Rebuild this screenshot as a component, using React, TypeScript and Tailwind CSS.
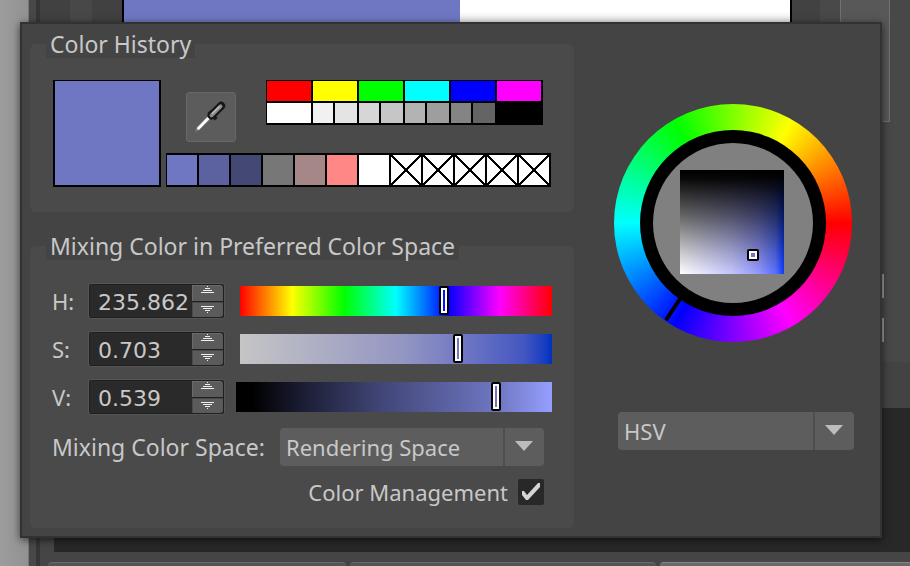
import { useState } from "react";
import type { ReactNode } from "react";

const HUES = ["#ff0000", "#ffff00", "#00ff00", "#00ffff", "#0000ff", "#ff00ff"];
const GRAYS = [
  ["#f1f1f1", "#e4e4e4"],
  ["#d6d6d6", "#c6c6c6"],
  ["#b3b3b3", "#9e9e9e"],
  ["#848484", "#646464"],
];
const HISTORY: (string | null)[] = [
  "#6f77c2", "#5b629f", "#434874", "#777777", "#a48786", "#ff8887", "#ffffff",
  null, null, null, null, null,
];

const THUMB =
  "[&::-webkit-slider-thumb]:appearance-none [&::-webkit-slider-thumb]:w-[10px] [&::-webkit-slider-thumb]:h-[29px] [&::-webkit-slider-thumb]:-mt-px [&::-webkit-slider-thumb]:rounded-[2px] [&::-webkit-slider-thumb]:border-2 [&::-webkit-slider-thumb]:border-black [&::-webkit-slider-thumb]:shadow-[inset_0_0_0_2px_#fff]";

function Swatch({ color, className }: { color: string; className: string }) {
  return (
    <button type="button" aria-label={"Use " + color} className={"block " + className} style={{ backgroundColor: color }} />
  );
}

function EmptySwatch() {
  return (
    <svg className="block size-[30px] bg-white" viewBox="0 0 30 30" shapeRendering="crispEdges" aria-hidden="true">
      <path d="M0 0L30 30M30 0L0 30" stroke="#000" strokeWidth="2.400" />
    </svg>
  );
}

function Eyedropper() {
  return (
    <svg className="size-8" viewBox="2 1 30 30" aria-hidden="true">
      <path d="M2 29L4 25L13 16L16 19L7 27L3 30Z" fill="#777" />
      <path d="M4.500 27.500L15.500 16" stroke="#fff" strokeWidth="2.600" />
      <path d="M15 11L22 18" stroke="#1b1b1b" strokeWidth="3.600" />
      <path d="M17.500 14.500L26.500 5.500" stroke="#161616" strokeWidth="7.600" strokeLinecap="round" />
      <path d="M17.500 14.500L26 6" stroke="#8b8b8b" strokeWidth="3.600" strokeLinecap="round" />
      <path d="M18 13L25 6" stroke="#c0c0c0" strokeWidth="1.400" />
    </svg>
  );
}

function Group({ title, children }: { title: string; children: ReactNode }) {
  return (
    <fieldset className="min-w-0 rounded-md bg-[#4a4a4a]">
      <legend className="ml-4 h-7 bg-[#444444] px-1 text-[23px] leading-7 whitespace-nowrap">{title}</legend>
      {children}
    </fieldset>
  );
}

function StepIcon({ down }: { down?: boolean }) {
  return (
    <svg className="block h-2 w-[14px]" viewBox="0 0 14 8" shapeRendering="crispEdges" aria-hidden="true">
      <path
        d={down ? "M0 0H13V1H0ZM2 2H11V3H2ZM4 4H9V5H4ZM6 6H7V7H6Z" : "M6 0H7V1H6ZM4 2H9V3H4ZM2 4H11V5H2ZM0 6H13V7H0Z"}
        fill="#f0f0f0"
      />
    </svg>
  );
}

function Channel({
  name, label, text, track, initial, wide,
}: { name: string; label: string; text: string; track: string; initial: number; wide?: boolean }) {
  const [pos, setPos] = useState(initial);
  const [value, setValue] = useState(text);
  return (
    <div className="flex h-9 items-center">
      <label htmlFor={name} className="w-9 text-[22px] leading-7">{label}</label>
      <div className="flex h-9 w-[137px] rounded-[3px] border border-[#565656] bg-[#1f1f1f] p-px">
        <input
          id={name}
          value={value}
          onChange={(e) => setValue(e.target.value)}
          className="min-w-0 flex-1 bg-[#2a2a2a] pt-1 pl-2 font-['DejaVu_Sans',sans-serif] text-[22px] leading-7 outline-none"
        />
        <div className="flex w-[31px] flex-col gap-px">
          <button type="button" aria-label={"Increase " + name} className="flex flex-1 items-start justify-center rounded-tr-[3px] border-t border-l border-[#6b6b6b] bg-[#5b5b5b]">
            <StepIcon />
          </button>
          <button type="button" aria-label={"Decrease " + name} className="flex flex-1 items-center justify-center rounded-br-[3px] border-t border-l border-[#4a4a4a] bg-[#5b5b5b]">
            <StepIcon down />
          </button>
        </div>
      </div>
      <input
        type="range"
        aria-label={name + " slider"}
        min={0}
        max={1}
        step={0.001}
        value={pos}
        onChange={(e) => setPos(Number(e.target.value))}
        className={(wide ? "ml-[11px] " : "ml-[15px] ") + "h-[30px] min-w-0 flex-1 appearance-none " + track + " " + THUMB}
      />
    </div>
  );
}

function Dropdown({ id, value, className }: { id: string; value: string; className: string }) {
  return (
    <div className={"relative " + className}>
      <select id={id} aria-label={value} className="block h-[38px] w-full appearance-none rounded bg-[#5d5d5d] pr-10 pl-[6px] text-[22px] leading-7 outline-none">
        <option>{value}</option>
      </select>
      <div className="pointer-events-none absolute inset-y-0 right-0 flex w-[41px] justify-center border-l-2 border-[#4e4e4e] pt-[13px] pr-[2px]">
        <svg className="h-[10px] w-[18px]" viewBox="0 0 18 10" aria-hidden="true">
          <path d="M0 0H18L9 10Z" fill="#bdbdbd" />
        </svg>
      </div>
    </div>
  );
}

function ColorWheel() {
  return (
    <div className="relative flex size-[238px] items-center justify-center rounded-full bg-[conic-gradient(from_90deg,#f00,#f0f,#00f,#0ff,#0f0,#ff0,#f00)]">
      <div className="flex size-[186px] items-center justify-center rounded-full bg-black">
        <div className="flex size-40 items-center justify-center rounded-full bg-[#808080] pr-[2px] pb-[2px]">
          <div className="size-[104px] bg-[linear-gradient(to_top,transparent,rgba(0,0,0,0.2)_20%,rgba(0,0,0,0.6)_56%,rgba(0,0,0,0.97)_92%,#000),linear-gradient(to_right,#fff,#c4c6ff_50%,#9298ff_76%,#5870ff_92%,#0a3cff)]" />
        </div>
      </div>
      <svg className="absolute inset-0 size-full" viewBox="0 0 238 238" aria-hidden="true">
        <path d="M66 195L52 216" stroke="#000" strokeWidth="4" />
        <rect x="134" y="146" width="10" height="10" rx="1" fill="#6f77c2" stroke="#000" strokeWidth="2" />
        <rect x="136" y="148" width="6" height="6" fill="none" stroke="#fff" strokeWidth="2" />
      </svg>
    </div>
  );
}

function Backdrop() {
  return (
    <div className="flex h-screen w-full bg-[#454545]" aria-hidden="true">
      <div className="w-7 bg-gradient-to-r from-[#9c9c9c] to-[#929292]" />
      <div className="w-2 border-l border-[#777] bg-[#484848]" />
      <div className="w-1 bg-[#363636]" />
      <div className="flex min-w-0 flex-1 flex-col">
        <div className="flex h-[122px]">
          <div className="w-[30px] bg-[#414141]" />
          <div className="w-[22px] bg-[#484848]" />
          <div className="w-[30px] bg-[#414141]" />
          <div className="flex flex-1 border-x-2 border-black">
            <div className="flex-[336] bg-[#6f77c2]" />
            <div className="flex-[330] bg-gradient-to-b from-white from-10% to-[#ddd] to-20%" />
          </div>
          <div className="w-7 bg-[#424242]" />
          <div className="w-5 bg-[#494949]" />
          <div className="w-[50px] border-x border-b border-[#707070] bg-[#585858]" />
          <div className="w-5 bg-[#484848]" />
        </div>
        <div className="flex h-60 flex-col items-end gap-5 bg-[#484848] pt-[152px] pr-[26px]">
          <div className="h-6 w-[2px] bg-[#999]" />
          <div className="h-6 w-[2px] bg-[#999]" />
        </div>
        <div className="h-[46px] bg-[#434343]" />
        <div className="ml-[14px] flex-1 bg-[#282828]" />
        <div className="mt-[10px] ml-2 flex h-1 gap-1">
          <div className="w-[298px] rounded-t-sm border-t border-[#6a6a6a] bg-[#555]" />
          <div className="w-[306px] rounded-t-sm border-t border-[#6a6a6a] bg-[#555]" />
          <div className="flex-1 rounded-tl-sm border-t border-[#858585] bg-[#696969]" />
        </div>
      </div>
    </div>
  );
}

export default function App() {
  const [managed, setManaged] = useState(true);
  return (
    <div className="relative h-screen overflow-hidden font-['Noto_Sans','Open_Sans',sans-serif] text-[#c8c8c8]">
      <Backdrop />
      <main className="absolute top-[22px] right-7 left-5 flex border-2 border-[#323232] bg-[#444444] pb-2 pl-2 shadow-[0_2px_8px_rgba(0,0,0,0.6)]">
        <div className="flex w-[544px] flex-col gap-5 pt-[6px]">
          <Group title="Color History">
            <div className="flex gap-[5px] pt-[22px] pb-[25px] pl-[23px]">
              <div className="border-t border-r-2 border-b-2 border-l-2 border-black">
                <div className="size-[104px] bg-[#6f77c2]" />
              </div>
              <div className="flex flex-col justify-between">
                <div className="flex items-start pl-5">
                  <button type="button" aria-label="Pick color" className="mt-3 mr-[30px] flex size-[50px] items-center justify-center rounded-[3px] border border-[#686868] bg-[#5c5c5c]">
                    <Eyedropper />
                  </button>
                  <div className="grid grid-cols-6 gap-[2px] bg-black pt-px pr-[2px] pb-[2px] pl-px">
                    {HUES.map((c) => <Swatch key={c} color={c} className="h-5 w-11" />)}
                    <Swatch color="#ffffff" className="h-5 w-11" />
                    {GRAYS.map(([a, b]) => (
                      <div key={a} className="flex gap-[2px]">
                        <Swatch color={a} className="h-5 w-5" />
                        <Swatch color={b} className="h-5 w-[22px]" />
                      </div>
                    ))}
                    <Swatch color="#000000" className="h-5 w-11" />
                  </div>
                </div>
                <div className="flex w-fit gap-[2px] bg-black py-[2px] pr-[2px] pl-px">
                  {HISTORY.map((c, i) => c ? <Swatch key={i} color={c} className="size-[30px]" /> : <EmptySwatch key={i} />)}
                </div>
              </div>
            </div>
          </Group>
          <Group title="Mixing Color in Preferred Color Space">
            <div className="flex flex-col gap-3 pt-[23px] pr-[22px] pb-[22px] pl-[22px]">
              <Channel
                name="hue" label="H:" text="235.862" initial={0.658}
                track="bg-[linear-gradient(to_right,#f00,#ff0,#0f0,#0ff,#00f,#f0f,#f00)]"
              />
              <Channel
                name="saturation" label="S:" text="0.703" initial={0.705}
                track="bg-[linear-gradient(to_right,#c5c5c5,#9496c2_52%,#6f77c4_72%,#4456c1_91%,#1c40c0_97%,#0030c0)]"
              />
              <Channel
                name="value" label="V:" text="0.539" initial={0.833} wide
                track="bg-[linear-gradient(to_right,#000_5%,#1c1f36_22%,#414677_46%,#6f77c2_83%,#969fff)]"
              />
              <div className="flex items-center justify-between pt-px pr-2">
                <label htmlFor="space" className="text-[23px] leading-7">Mixing Color Space:</label>
                <Dropdown id="space" value="Rendering Space" className="w-[264px]" />
              </div>
              <label className="flex items-center justify-end gap-[10px] pr-2 text-[22px] leading-7">
                Color Management
                <span className="relative block size-[26px]">
                  <input type="checkbox" checked={managed} onChange={(e) => setManaged(e.target.checked)} className="block size-full appearance-none rounded-[2px] bg-[#282828]" />
                  {managed && (
                    <svg className="pointer-events-none absolute inset-0 size-full" viewBox="0 0 26 26" aria-hidden="true">
                      <path d="M4 12H6L9 16L20 4H22V8L10 21H8L4 16Z" fill="#d4d4d4" />
                    </svg>
                  )}
                </span>
              </label>
            </div>
          </Group>
        </div>
        <div className="flex min-w-0 flex-1 flex-col gap-[70px] pt-20 pr-[26px] pl-10">
          <ColorWheel />
          <Dropdown id="model" value="HSV" className="ml-1" />
        </div>
      </main>
    </div>
  );
}
